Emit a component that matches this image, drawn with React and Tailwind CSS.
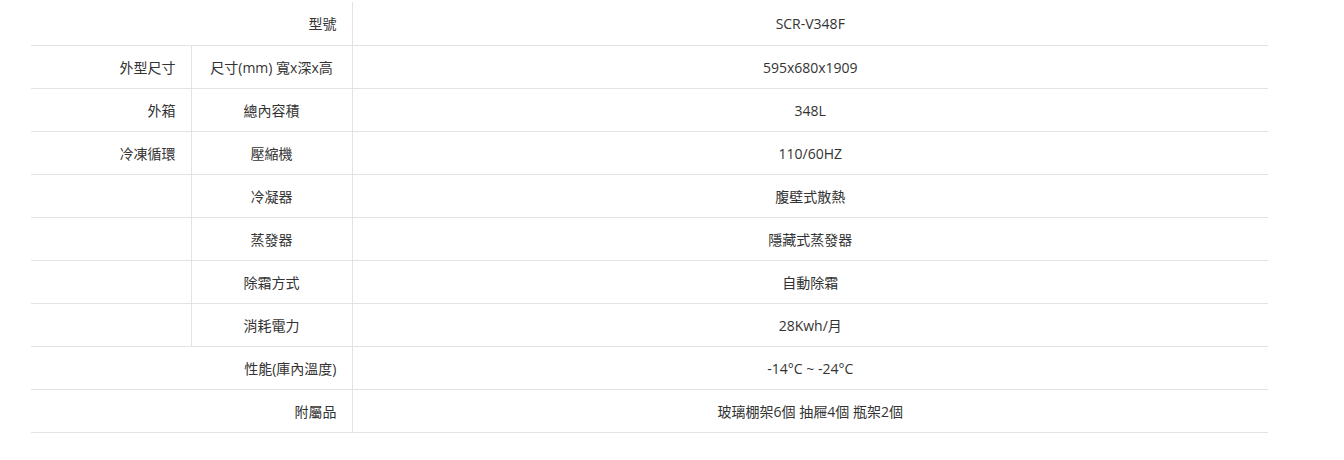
import React from 'react';

const rows = [
  { group: null, label: '型號', value: 'SCR-V348F', span: true },
  { group: '外型尺寸', label: '尺寸(mm) 寬x深x高', value: '595x680x1909' },
  { group: '外箱', label: '總內容積', value: '348L' },
  { group: '冷凍循環', label: '壓縮機', value: '110/60HZ' },
  { group: '', label: '冷凝器', value: '腹壁式散熱' },
  { group: '', label: '蒸發器', value: '隱藏式蒸發器' },
  { group: '', label: '除霜方式', value: '自動除霜' },
  { group: '', label: '消耗電力', value: '28Kwh/月' },
  { group: null, label: '性能(庫內溫度)', value: '-14°C ~ -24°C', span: true },
  { group: null, label: '附屬品', value: '玻璃棚架6個 抽屜4個 瓶架2個', span: true },
];

const SpecTable = () => {
  return (
    <table className="ml-[31px] mt-[2px] w-[1237px] table-fixed border-collapse text-[14px] text-[#333]">
      <colgroup>
        <col className="w-[160px]" />
        <col className="w-[161px]" />
        <col />
      </colgroup>
      <tbody>
        {rows.map((row, i) => (
          <tr key={i} className="h-[43px] border-b border-[#e3e3e3]">
            {row.span ? (
              <td colSpan={2} className="border-r border-[#e3e3e3] pt-px pr-[15px] text-right align-middle">
                {row.label}
              </td>
            ) : (
              <>
                <td className="border-r border-[#e3e3e3] pt-px pr-[15px] text-right align-middle">{row.group}</td>
                <td className="border-r border-[#e3e3e3] pt-px text-center align-middle">{row.label}</td>
              </>
            )}
            <td className="pt-px text-center align-middle">{row.value}</td>
          </tr>
        ))}
      </tbody>
    </table>
  );
};

export default function App() {
  return (
    <div className="h-[460px] w-[1344px] bg-white font-['Open_Sans','Noto_Sans_CJK_TC',sans-serif]">
      <SpecTable />
    </div>
  );
}
